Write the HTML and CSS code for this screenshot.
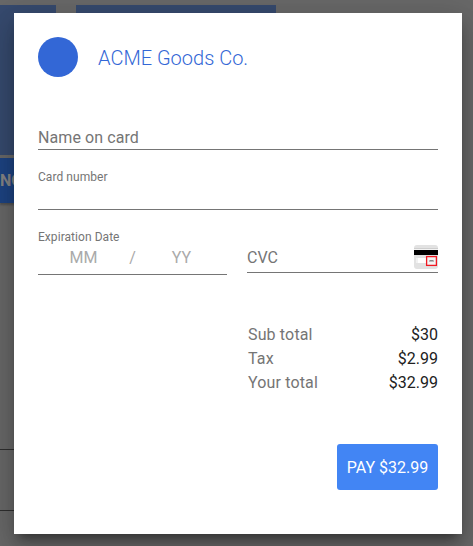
FILE: index.html
```html
<!DOCTYPE html>
<html lang="en">
<head>
<meta charset="utf-8">
<title>ACME Goods Co.</title>
<link rel="stylesheet" href="styles.css">
</head>
<body>
<div class="page">
  <div class="tiles">
    <div class="product">
      <div class="tile"></div>
      <div class="buy">NOW</div>
    </div>
    <div class="tile wide"></div>
  </div>
  <div class="row first"></div>
  <div class="row second"></div>
</div>
<main class="dialog">
  <header class="header">
    <div class="logo"></div>
    <h1>ACME Goods Co.</h1>
  </header>
  <div class="field name">Name on card</div>
  <div class="field number"><label>Card number</label></div>
  <div class="split">
    <div class="field expiry">
      <label>Expiration Date</label>
      <div class="date"><span>MM</span><i>/</i><span>YY</span></div>
    </div>
    <div class="field cvc">
      <span>CVC</span>
      <svg width="24" height="24" viewBox="0 0 24 24" shape-rendering="crispEdges">
        <rect width="24" height="24" rx="3" fill="#e2e2e2" shape-rendering="auto"/>
        <rect y="3" width="24" height="1" fill="#cfcfcf"/>
        <rect y="4" width="24" height="1" fill="#f3f3f3"/>
        <rect y="5" width="24" height="5" fill="#000"/>
        <rect x="2" y="13" width="10" height="5" fill="#f1f1f1"/>
        <rect x="4" y="13" width="8" height="5" fill="#fff"/>
        <rect x="12.6" y="11.6" width="9.8" height="8.8" fill="#f4f4f4" stroke="#f01822" stroke-width="1.3" shape-rendering="auto"/>
        <rect x="15" y="15" width="5" height="2" fill="#bbb"/>
        <rect x="16" y="15" width="3" height="1" fill="#888"/>
      </svg>
    </div>
  </div>
  <dl class="totals">
    <dt>Sub total</dt><dd>$30</dd>
    <dt>Tax</dt><dd>$2.99</dd>
    <dt>Your total</dt><dd>$32.99</dd>
  </dl>
  <button class="pay">PAY $32.99</button>
</main>
</body>
</html>
```
FILE: styles.css
```css
* { box-sizing: border-box; }
body {
  margin: 0;
  height: 546px;
  overflow: hidden;
  position: relative;
  background: #686868;
  font: 16px/24px Roboto, sans-serif;
  color: #757575;
}
.page { padding-top: 5px; }
.tiles { display: flex; gap: 20px; height: 444px; }
.product { width: 56px; }
.tile { height: 150px; background: #364a6e; }
.tile.wide { width: 200px; }
.buy {
  height: 45px;
  margin-top: 3px;
  overflow: hidden;
  background: #1d4382;
  box-shadow: 0 2px 2px rgba(0, 0, 0, .25);
  color: #858585;
  font-weight: 700;
  line-height: 45px;
}
.row { width: 400px; height: 61px; border-top: 1px solid #2f2f2f; }
.dialog {
  position: absolute;
  top: 13px;
  left: 14px;
  width: 448px;
  height: 521px;
  padding: 24px;
  background: #fff;
  box-shadow: 0 16px 24px 2px rgba(0, 0, 0, .14), 0 6px 30px 5px rgba(0, 0, 0, .12), 0 8px 10px -5px rgba(0, 0, 0, .4);
}
.header { display: flex; align-items: center; gap: 20px; height: 40px; }
.logo { width: 40px; height: 40px; border-radius: 50%; background: #3367d6; }
h1 { margin: 2px 0 0; color: #3367d6; font-size: 20px; font-weight: 300; line-height: 28px; }
.field { border-bottom: 1px solid #757575; }
.field label { display: block; font-size: 12px; line-height: 20px; letter-spacing: .05px; }
.name { height: 25px; margin-top: 48px; line-height: 26px; letter-spacing: .08px; }
.number { height: 43px; margin-top: 17px; }
.split { display: flex; align-items: flex-start; gap: 20px; margin-top: 17px; }
.expiry { width: 189px; height: 48px; }
.date { display: flex; justify-content: space-between; margin-top: -1px; color: #aaa; }
.date span { width: 91px; text-align: center; }
.date i { font-style: normal; }
.cvc { display: flex; justify-content: space-between; flex: 1; height: 28px; margin-top: 18px; line-height: 26px; }
.totals {
  display: grid;
  grid-template-columns: 1fr auto;
  width: 190px;
  margin: 48px 0 0 auto;
}
dt { letter-spacing: .15px; }
dd { margin: 0; color: #212121; text-align: right; }
.pay {
  display: block;
  width: 101px;
  height: 46px;
  margin: 49px 0 0 auto;
  padding: 0;
  border: 0;
  border-radius: 3px;
  background: #4285f4;
  color: #fff;
  font: 16px/48px Roboto, sans-serif;
}
```
